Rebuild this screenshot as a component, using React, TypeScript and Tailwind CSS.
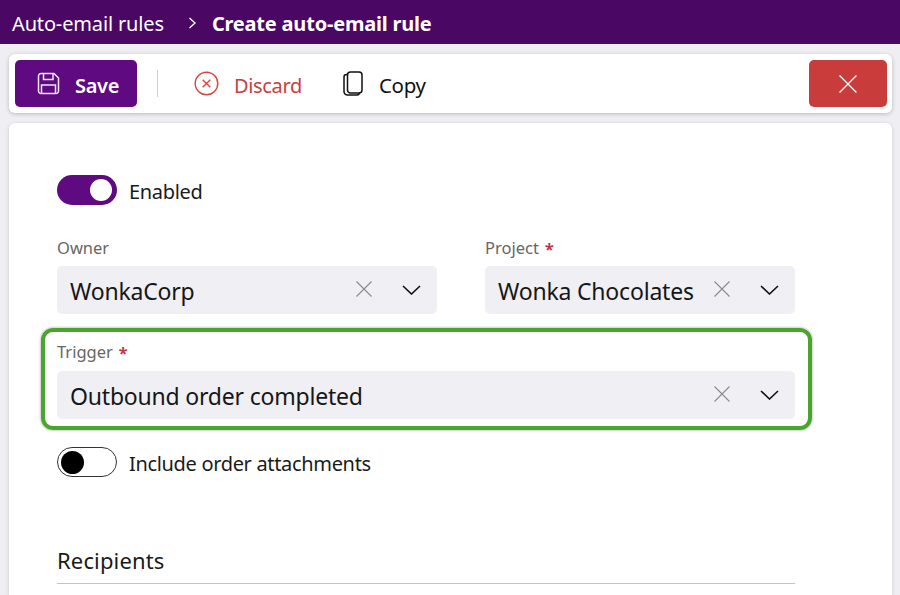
import React from "react";

function XIcon({ size, className }: { size: number; className?: string }) {
  return (
    <svg width={size} height={size} viewBox="0 0 16 16" fill="none" stroke="currentColor" strokeWidth="1.1" className={className}>
      <path d="M0.5 0.5 15.5 15.5M15.5 0.5 0.5 15.5" />
    </svg>
  );
}

function Chevron() {
  return (
    <svg width="19" height="10" viewBox="0 0 19 10" fill="none" stroke="#111" strokeWidth="1.6" className="shrink-0">
      <path d="M1 1 9.5 9 18 1" />
    </svg>
  );
}

function Select({ value, className }: { value: string; className?: string }) {
  return (
    <div className={`flex h-[48px] items-center rounded-[5px] bg-[#efeff4] pl-[13px] pr-[16px] ${className ?? ""}`}>
      <span className="flex-1 whitespace-nowrap pt-[2px] text-[23px] leading-none tracking-[-0.2px] text-[#161616]">{value}</span>
      <XIcon size={16} className="mb-[3px] mr-[30px] text-[#8a8a8a]" />
      <Chevron />
    </div>
  );
}

function Label({ text, required }: { text: string; required?: boolean }) {
  return (
    <div className="flex h-[19px] items-center gap-[6px] text-[16.5px] leading-none text-[#666666]">
      {text}
      {required && <span className="text-[16px] font-bold text-[#c8323a]">*</span>}
    </div>
  );
}

export default function App() {
  return (
    <div className="flex h-[595px] w-[900px] flex-col overflow-hidden bg-[#eeeef3] font-['Noto_Sans',sans-serif]">
      <header className="flex h-[44px] shrink-0 items-center bg-[#4a0763] pl-[12px] pt-[3px] text-white">
        <span className="text-[20px] tracking-[-0.15px]">Auto-email rules</span>
        <svg width="9" height="12" viewBox="0 0 9 12" fill="none" stroke="white" strokeWidth="1.4" className="mb-[2px] ml-[24px]">
          <path d="M1.5 1 7 6 1.5 11" />
        </svg>
        <span className="ml-[15px] text-[20px] font-bold tracking-[-0.2px]">Create auto-email rule</span>
      </header>

      <div className="ml-[9px] mr-[8px] mt-[10px] flex h-[59px] shrink-0 items-center rounded-[6px] bg-white pl-[6px] pr-[5px] shadow-[0_1px_4px_rgba(0,0,0,0.22)]">
        <button className="flex h-[47px] w-[122px] items-center rounded-[5px] bg-[#5f0a80] pl-[22px] text-white">
          <svg width="23" height="23" viewBox="0 0 23 23" fill="none" stroke="#f0e6f4" strokeWidth="1.5" className="mb-[1px]">
            <path d="M4 1.5H17L21.5 6V19A2.5 2.5 0 0 1 19 21.5H4A2.5 2.5 0 0 1 1.5 19V4A2.5 2.5 0 0 1 4 1.5Z" />
            <path d="M6.5 1.5V7.5H16V1.5" />
            <path d="M4.5 21.5V13H18.5V21.5" />
          </svg>
          <span className="ml-[15px] mt-[4px] text-[20px] font-semibold leading-none tracking-[-0.3px]">Save</span>
        </button>
        <div className="ml-[20px] h-[27px] w-px bg-[#d0d0d0]" />
        <button className="ml-[36px] flex items-center text-[#c8403f]">
          <svg width="25" height="25" viewBox="0 0 25 25" fill="none" stroke="#d8473f" strokeWidth="1.4" className="mb-[1px]">
            <circle cx="12.5" cy="12.5" r="11.3" />
            <path d="M8.7 8.7 16.3 16.3M16.3 8.7 8.7 16.3" />
          </svg>
          <span className="ml-[15px] mt-[4px] text-[20px] leading-none tracking-[-0.35px]">Discard</span>
        </button>
        <button className="ml-[41px] flex items-center text-[#111]">
          <svg width="20" height="25" viewBox="0 0 20 25" fill="none" stroke="#111" strokeWidth="1.5" className="mb-[1px]">
            <rect x="4.5" y="1" width="14.5" height="21" rx="3" />
            <path d="M4.5 3.5H3.5A2.5 2.5 0 0 0 1 6V20.5A3.5 3.5 0 0 0 4.5 24H14A2.5 2.5 0 0 0 16.5 22" />
          </svg>
          <span className="ml-[16px] mt-[4px] text-[20.5px] leading-none tracking-[-0.3px]">Copy</span>
        </button>
        <button className="ml-auto flex h-[47px] w-[78px] items-center justify-center rounded-[5px] bg-[#c93c3c] text-white">
          <XIcon size={18} />
        </button>
      </div>

      <main className="ml-[9px] mr-[8px] mt-[10px] flex-1 rounded-t-[6px] bg-white pl-[48px] pr-[97px] pt-[52px] shadow-[0_1px_4px_rgba(0,0,0,0.15)]">
        <div className="flex h-[30px] items-center">
          <div className="flex h-[30px] w-[60px] items-center justify-end rounded-full bg-[#5f0a80] pr-[5px]">
            <div className="h-[22px] w-[22px] rounded-full bg-white" />
          </div>
          <span className="ml-[12px] mt-[3px] text-[20px] leading-none tracking-[-0.33px] text-[#1a1a1a]">Enabled</span>
        </div>

        <div className="mt-[34px] flex gap-[48px]">
          <div className="w-[380px]">
            <Label text="Owner" />
            <Select value="WonkaCorp" className="mt-[8px]" />
          </div>
          <div className="flex-1">
            <Label text="Project" required />
            <Select value="Wonka Chocolates" className="mt-[8px]" />
          </div>
        </div>

        <div className="-ml-[16px] -mr-[17px] mt-[14px] h-[102px] rounded-[12px] border-[4px] border-[#4aa52e] pl-[12px] pr-[13px] pt-[11px] shadow-[0_0_3px_rgba(0,0,0,0.4)]">
          <Label text="Trigger" required />
          <Select value="Outbound order completed" className="mt-[9px]" />
        </div>

        <div className="mt-[17px] flex h-[30px] items-center">
          <div className="flex h-[30px] w-[60px] items-center rounded-full border border-[#333] pl-[3px]">
            <div className="h-[23px] w-[23px] rounded-full bg-black" />
          </div>
          <span className="ml-[12px] mt-[3px] text-[20px] leading-none tracking-[-0.33px] text-[#1a1a1a]">Include order attachments</span>
        </div>

        <div className="mt-[68px] border-b border-[#c4c4c4] pb-[8px] text-[22px] leading-[30px] tracking-[0.15px] text-[#1a1a1a]">Recipients</div>
      </main>
    </div>
  );
}
